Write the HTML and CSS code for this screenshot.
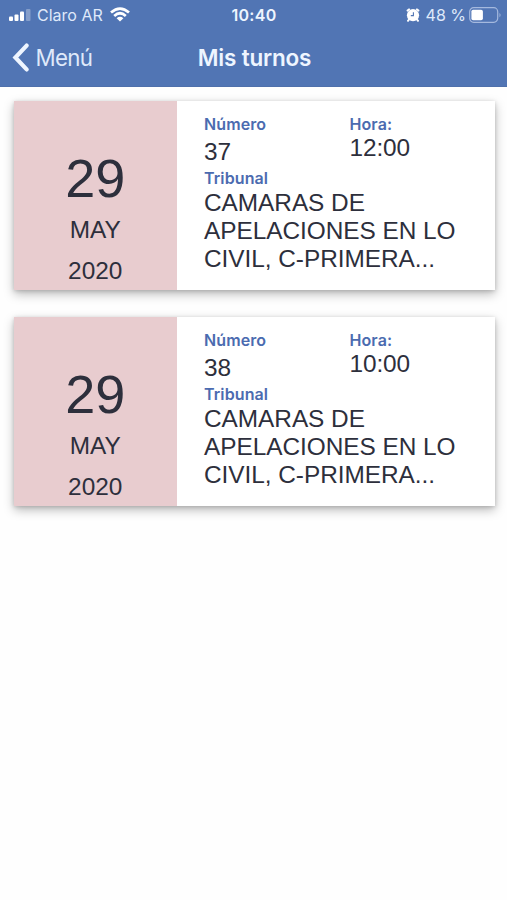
FILE: index.html
```html
<!DOCTYPE html>
<html lang="es">
<head>
<meta charset="utf-8">
<title>Mis turnos</title>
<link rel="stylesheet" href="styles.css">
</head>
<body>
<header class="header">
  <div class="status">
    <div class="status-left">
      <svg class="signal" width="22" height="12" viewBox="0 0 22 12" fill="#fff"><rect x="0" y="7.5" width="4" height="4.5" rx="1"/><rect x="5.5" y="5.5" width="4" height="6.5" rx="1"/><rect x="11" y="2.5" width="4" height="9.5" rx="1"/><rect x="17" y="0" width="4.5" height="12" rx="1" opacity=".3"/></svg>
      <span class="carrier">Claro AR</span>
      <svg class="wifi" width="20" height="15" viewBox="0 0 20 15" fill="none" stroke="#fff" stroke-width="2.7"><path d="M1 5.6Q10-2.5 19 5.6M4.2 8.9Q10 3.6 15.8 8.9"/><path d="M10 14.5L6.6 11.2Q10 8.4 13.4 11.2Z" fill="#fff" stroke="none"/></svg>
    </div>
    <span class="clock">10:40</span>
    <div class="status-right">
      <svg class="alarm" width="14" height="14" viewBox="0 0 14 14"><path d="M1.6 2.6L3 1.4M12.4 2.6L11 1.4M3 11.5L2 12.8M11 11.5L12 12.8" stroke="#fff" stroke-width="2" stroke-linecap="round"/><circle cx="7" cy="7.2" r="6.1" fill="#fff"/><path d="M7.4 4.2V7.6H4.8" fill="none" stroke="#5175b4" stroke-width="1.1"/></svg>
      <span class="percent">48 %</span>
      <svg class="battery" width="33" height="16" viewBox="0 0 33 16"><rect x=".7" y=".7" width="28" height="14.6" rx="4" fill="none" stroke="#a5b9de" stroke-width="1.2"/><rect x="2.4" y="2.7" width="11.5" height="10.6" rx="1.8" fill="#fff"/><path d="M30.5 5.7Q32.6 8 30.5 10.3Z" fill="#a5b9de"/></svg>
    </div>
  </div>
  <nav class="nav">
    <a class="back"><svg width="17" height="29" viewBox="0 0 17 29" fill="none" stroke="#eef5ff" stroke-width="4.2" stroke-linecap="round" stroke-linejoin="miter"><path d="M14.6 2.6L3.4 14.5L14.6 26.4"/></svg><span class="back-label">Menú</span></a>
    <h1 class="title">Mis turnos</h1>
  </nav>
</header>
<main class="list">
  <article class="card">
    <div class="date"><span class="day">29</span><span class="month">MAY</span><span class="year">2020</span></div>
    <div class="info">
      <div class="row">
        <div class="number"><div class="label">Número</div><div class="value">37</div></div>
        <div class="time"><div class="label">Hora:</div><div class="value">12:00</div></div>
      </div>
      <div class="label court-label">Tribunal</div>
      <div class="court">CAMARAS DE<br>APELACIONES EN LO<br>CIVIL, C-PRIMERA...</div>
    </div>
  </article>
  <article class="card">
    <div class="date"><span class="day">29</span><span class="month">MAY</span><span class="year">2020</span></div>
    <div class="info">
      <div class="row">
        <div class="number"><div class="label">Número</div><div class="value">38</div></div>
        <div class="time"><div class="label">Hora:</div><div class="value">10:00</div></div>
      </div>
      <div class="label court-label">Tribunal</div>
      <div class="court">CAMARAS DE<br>APELACIONES EN LO<br>CIVIL, C-PRIMERA...</div>
    </div>
  </article>
</main>
</body>
</html>
```
FILE: styles.css
```css
* { box-sizing: border-box; }
html { background: #fefefe; }
body { margin: 0; min-height: 100vh; color: #2d2f3c; font-family: "Liberation Sans", sans-serif; white-space: nowrap; }
svg { display: block; flex: none; }
.header { height: 87px; background: #5175b4; color: #eef5ff; font-family: Inter, sans-serif; border-bottom: 1px solid #4f70ab; }
.status { height: 29px; display: grid; grid-template-columns: 1fr auto 1fr; align-items: center; padding: 0 5px 0 9px; font-size: 16px; line-height: 20px; }
.status-left, .status-right { display: flex; align-items: center; }
.carrier { margin-left: 6px; width: 67px; color: #dfe9fa; }
.wifi { margin-left: 6px; }
.clock { font-weight: 600; letter-spacing: .3px; margin-left: -3px; }
.status-right { justify-content: flex-end; }
.alarm { margin-right: 6px; }
.percent { margin-right: 3px; color: #dfe9fa; }
.nav { height: 57px; display: grid; grid-template-columns: 1fr auto 1fr; align-items: center; padding: 0 12px; }
.back { display: flex; align-items: center; gap: 6.5px; color: #dfe9fa; }
.back-label { font-size: 22.3px; line-height: 28px; letter-spacing: -.7px; }
.title { margin: 0 0 0 2px; font-size: 22.5px; line-height: 28px; font-weight: 600; letter-spacing: -.2px; }
.list { display: flex; flex-direction: column; gap: 27px; padding: 14px 12.5px 20px 14px; }
.card { height: 189px; display: flex; background: #fff; box-shadow: 0 4px 10px rgba(0,0,0,.27), 0 1px 4px rgba(0,0,0,.16); }
.date { width: 162.5px; background: #e8cccf; display: flex; flex-direction: column; align-items: center; padding-top: 47px; font-size: 24.4px; line-height: 41px; }
.day { font-size: 54px; line-height: 61px; }
.info { flex: 1; padding: 13px 0 0 27.5px; }
.row { display: flex; height: 54px; }
.number { width: 145.5px; }
.label { font-family: Inter, sans-serif; font-size: 16px; line-height: 20px; font-weight: 600; letter-spacing: .1px; color: #4b6bb0; }
.value { font-size: 24.4px; line-height: 28px; letter-spacing: -.1px; }
.number .value { margin-top: 4px; }
.court { margin-top: 1px; font-size: 24.4px; line-height: 28px; letter-spacing: -.04px; }
```
